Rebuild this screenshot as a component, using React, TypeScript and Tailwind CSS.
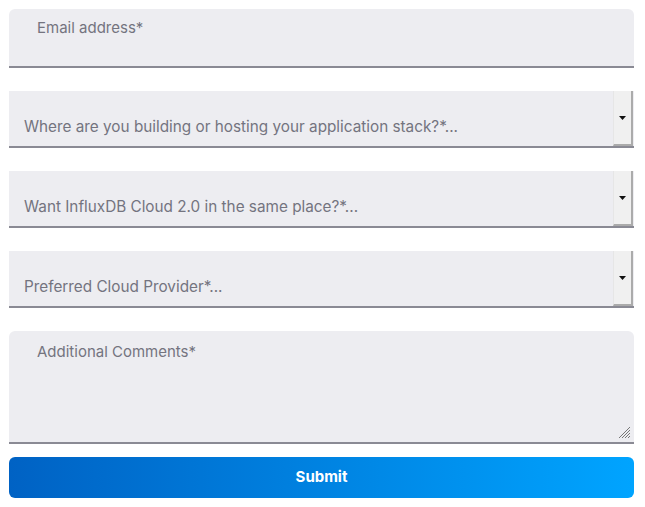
export default function App() {
  const selects = [
    'Where are you building or hosting your application stack?*...',
    'Want InfluxDB Cloud 2.0 in the same place?*...',
    'Preferred Cloud Provider*...',
  ];

  return (
    <div className="bg-white w-[645px] h-[507px] pl-[9px] pr-[11px] pt-[9px] font-['Inter',sans-serif]">
      <div className="flex flex-col">
        <div className="h-[59px] bg-[#ededf1] rounded-t-[6px] border-b-2 border-[#8a8a94] pl-[28px] pt-[6px]">
          <span className="text-[15px] text-[#74747f]">Email address*</span>
        </div>

        {selects.map((label, i) => (
          <div
            key={i}
            className="mt-[23px] h-[57px] bg-[#ededf1] border-b-2 border-[#8a8a94] flex items-stretch"
          >
            <div className="flex-1 flex items-end pl-[15px] pb-[7px]">
              <span className="text-[15.3px] text-[#74747f]">{label}</span>
            </div>
            <div className="w-[20px] mr-[1px] bg-[#f0f0f0] border-l border-l-[#e6e6e6] border-r-2 border-r-[#ababab] border-b-2 border-b-[#ababab] flex items-center justify-center">
              <svg width="7" height="4" viewBox="0 0 7 4">
                <path d="M0 0H7L3.5 4Z" fill="#111" />
              </svg>
            </div>
          </div>
        ))}

        <div className="relative mt-[23px] h-[113px] bg-[#ededf1] rounded-t-[6px] border-b-2 border-[#8a8a94] pl-[28px] pt-[8px]">
          <span className="text-[15px] text-[#74747f]">Additional Comments*</span>
          <svg className="absolute right-[3px] bottom-[3px]" width="14" height="14" viewBox="0 0 14 14">
            <path d="M13 2L2 13M13 5L5 13M13 8L8 13M13 11L11 13" stroke="#777" strokeWidth="1" />
          </svg>
        </div>

        <button className="mt-[13px] h-[41px] rounded-[6px] bg-gradient-to-r from-[#0062c4] to-[#00a4ff] text-white font-bold text-[15px]">
          Submit
        </button>
      </div>
    </div>
  );
}
